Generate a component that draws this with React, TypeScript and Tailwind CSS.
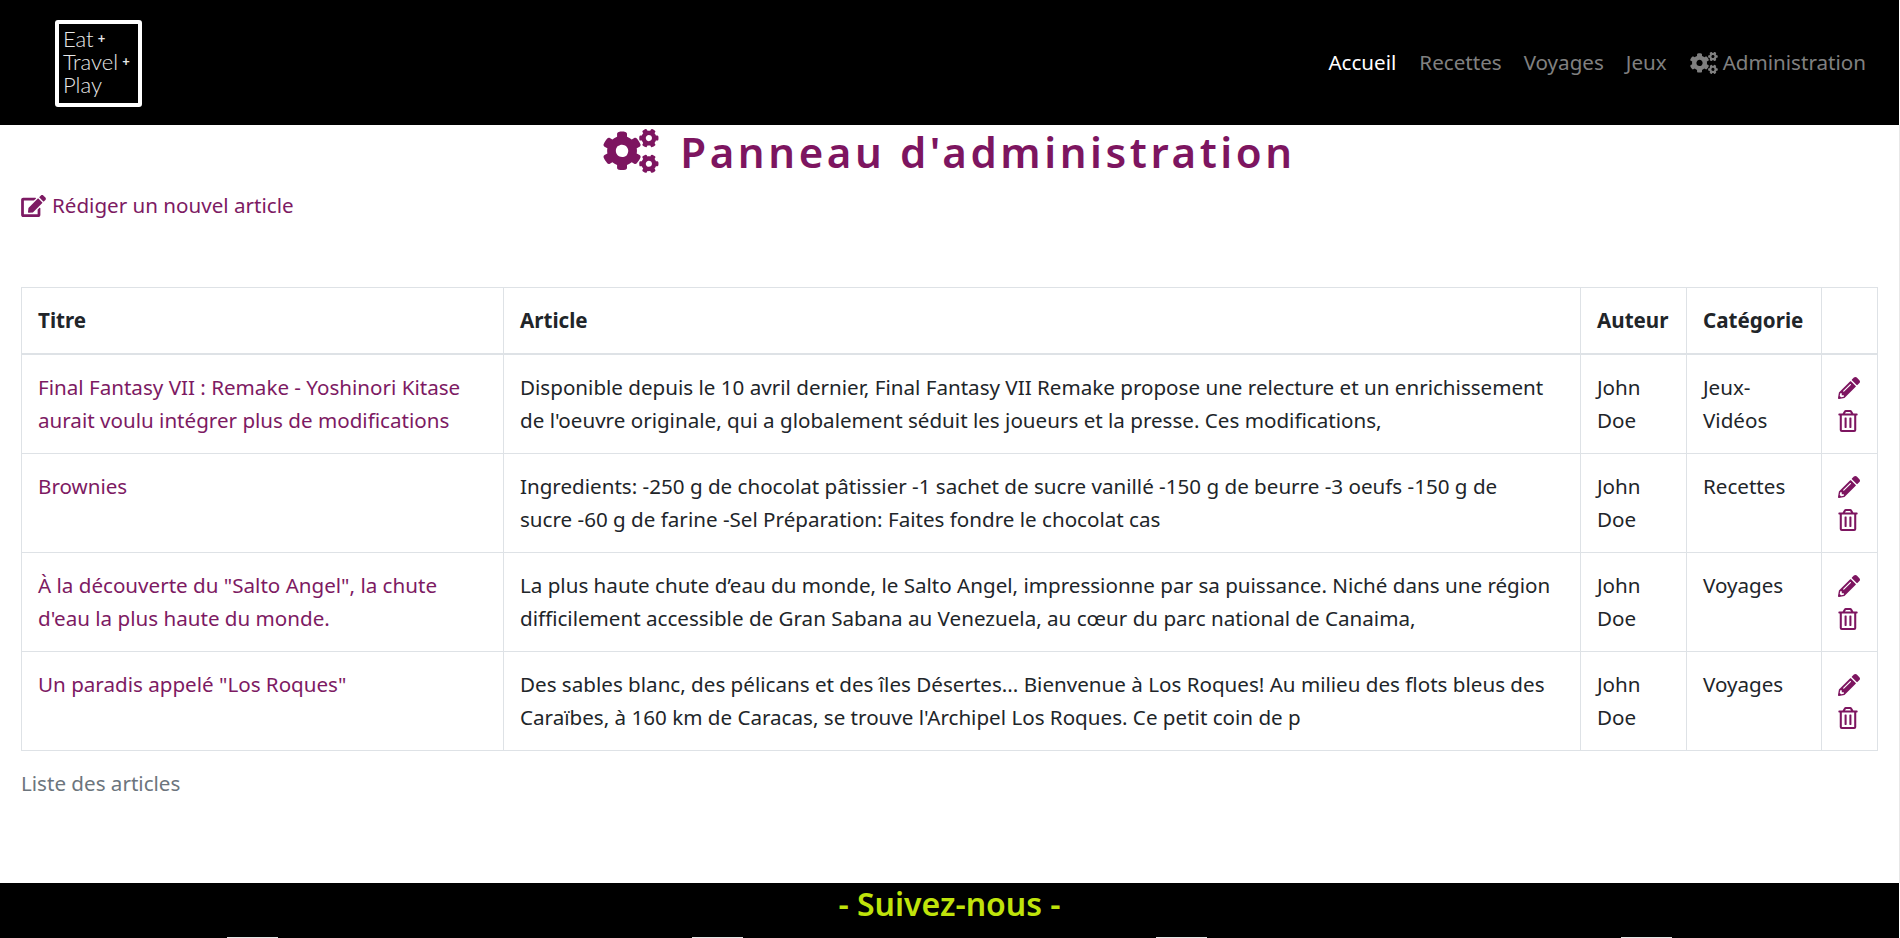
import { FaCogs, FaEdit, FaPencilAlt, FaRegTrashAlt } from "react-icons/fa";

const rows = [
  {
    title: ["Final Fantasy VII : Remake - Yoshinori Kitase", "aurait voulu intégrer plus de modifications"],
    body: [
      "Disponible depuis le 10 avril dernier, Final Fantasy VII Remake propose une relecture et un enrichissement",
      "de l'oeuvre originale, qui a globalement séduit les joueurs et la presse. Ces modifications,",
    ],
    category: ["Jeux-", "Vidéos"],
  },
  {
    title: ["Brownies"],
    body: [
      "Ingredients: -250 g de chocolat pâtissier -1 sachet de sucre vanillé -150 g de beurre -3 oeufs -150 g de",
      "sucre -60 g de farine -Sel Préparation: Faites fondre le chocolat cas",
    ],
    category: ["Recettes"],
  },
  {
    title: ["À la découverte du \"Salto Angel\", la chute", "d'eau la plus haute du monde."],
    body: [
      "La plus haute chute d’eau du monde, le Salto Angel, impressionne par sa puissance. Niché dans une région",
      "difficilement accessible de Gran Sabana au Venezuela, au cœur du parc national de Canaima,",
    ],
    category: ["Voyages"],
  },
  {
    title: ["Un paradis appelé \"Los Roques\""],
    body: [
      "Des sables blanc, des pélicans et des îles Désertes... Bienvenue à Los Roques! Au milieu des flots bleus des",
      "Caraïbes, à 160 km de Caracas, se trouve l'Archipel Los Roques. Ce petit coin de p",
    ],
    category: ["Voyages"],
  },
];

function Lines({ items }: { items: string[] }) {
  return (
    <>
      {items.map((line) => (
        <div key={line} className="whitespace-nowrap">
          {line}
        </div>
      ))}
    </>
  );
}

export default function App() {
  return (
    <div className="h-screen overflow-hidden bg-white font-['Noto_Sans',sans-serif] text-[20.6px] leading-[33px] text-[#212529]">
      <nav className="flex h-[125px] w-[1899px] items-center justify-between bg-black pl-[55px] pr-[33px]">
        <div className="mt-[1px] flex h-[87px] w-[87px] flex-col justify-center rounded-[3px] border-4 border-white pb-[3px] pl-[4px] font-['Lato',sans-serif] text-[22px] font-light leading-[23px] text-[#e8e8e8]">
          <span className="flex items-center gap-[4px]">
            Eat <span className="text-[13px] font-bold">+</span>
          </span>
          <span className="flex items-center gap-[4px] whitespace-nowrap">
            Travel <span className="text-[13px] font-bold">+</span>
          </span>
          <span>Play</span>
        </div>
        <ul className="flex items-center gap-[22px] text-[#808080]">
          <li className="mr-[1px] text-white">Accueil</li>
          <li>Recettes</li>
          <li>Voyages</li>
          <li className="mr-[1px]">Jeux</li>
          <li className="flex items-center gap-[5px]">
            <FaCogs className="h-[22px] w-[28px]" />
            Administration
          </li>
        </ul>
      </nav>

      <main className="h-[758px] border-r border-[#e8e8e8] px-[21px]">
        <h1 className="flex h-[52px] items-center justify-center gap-[21px] text-[42px] font-semibold tracking-[3.6px] text-[#7d1560]">
          <FaCogs className="h-[44px] w-[56px]" />
          Panneau d'administration
        </h1>
        <a className="mt-[12px] flex items-center gap-[6px] text-[#7d1a63]">
          <FaEdit className="h-[22px] w-[25px]" />
          Rédiger un nouvel article
        </a>
        <table className="mt-[65px] w-[1856px] table-fixed border-collapse border border-[#dee2e6]">
          <colgroup>
            <col className="w-[482px]" />
            <col className="w-[1077px]" />
            <col className="w-[106px]" />
            <col className="w-[135px]" />
            <col className="w-[56px]" />
          </colgroup>
          <thead>
            <tr className="border-b-2 border-[#dee2e6] text-left font-bold">
              <th className="border-r border-[#dee2e6] p-4">Titre</th>
              <th className="border-r border-[#dee2e6] p-4">Article</th>
              <th className="border-r border-[#dee2e6] p-4">Auteur</th>
              <th className="border-r border-[#dee2e6] p-4">Catégorie</th>
              <th className="p-4"></th>
            </tr>
          </thead>
          <tbody>
            {rows.map((row) => (
              <tr key={row.title[0]} className="border-b border-[#dee2e6] align-top">
                <td className="border-r border-[#dee2e6] p-4 text-[#7d1a63]">
                  <Lines items={row.title} />
                </td>
                <td className="border-r border-[#dee2e6] p-4">
                  <Lines items={row.body} />
                </td>
                <td className="border-r border-[#dee2e6] p-4">
                  <Lines items={["John", "Doe"]} />
                </td>
                <td className="border-r border-[#dee2e6] p-4">
                  <Lines items={row.category} />
                </td>
                <td className="p-4 text-[#7d1560]">
                  <div className="flex h-[33px] items-center">
                    <FaPencilAlt className="h-[22px] w-[22px]" />
                  </div>
                  <div className="flex h-[33px] items-center">
                    <FaRegTrashAlt className="h-[22px] w-[20px]" />
                  </div>
                </td>
              </tr>
            ))}
          </tbody>
        </table>
        <p className="mt-[16px] text-[#6c757d]">Liste des articles</p>
      </main>

      <footer className="w-[1899px] bg-black px-[20px] text-center">
        <h2 className="h-[54px] text-[32px] font-semibold leading-[42px] text-[#bfe30b]">- Suivez-nous -</h2>
        <div className="grid grid-cols-4">
          <div className="mx-auto h-[50px] w-[51px] bg-[#e4e4e4]"></div>
          <div className="mx-auto h-[50px] w-[51px] bg-[#e4e4e4]"></div>
          <div className="mx-auto h-[50px] w-[51px] bg-[#e4e4e4]"></div>
          <div className="mx-auto h-[50px] w-[51px] bg-[#e4e4e4]"></div>
        </div>
      </footer>
    </div>
  );
}
